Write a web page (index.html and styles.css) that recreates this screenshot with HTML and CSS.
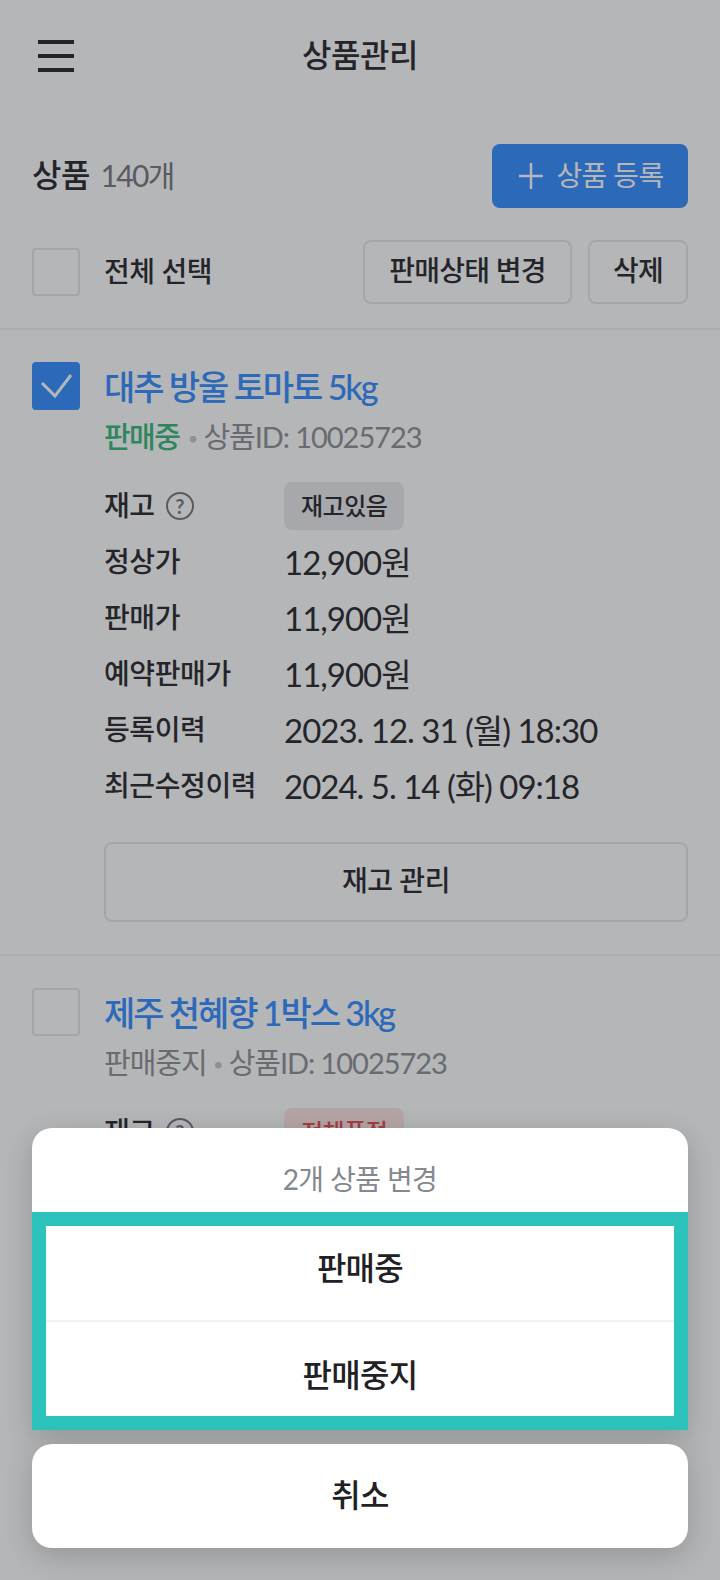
FILE: index.html
```html
<!DOCTYPE html>
<html lang="ko">

<head>
    <meta charset="UTF-8" />
    <meta name="viewport" content="width=device-width, initial-scale=1.0" />
    <title>상품관리</title>
    <link rel="stylesheet" href="styles.css">
</head>

<body>
    <header class="topbar">
        <div class="menu-icon">
            <div class="bar"></div>
            <div class="bar"></div>
            <div class="bar"></div>
        </div>
        <h1>상품관리</h1>
    </header>

    <main>
        <section class="summary">
            <h2>상품 <span class="count">140개</span></h2>
            <button class="btn-primary">
                <svg width="24" height="26" viewBox="0 0 24 26">
                    <path d="M12 0v26M0 13h24" fill="none" stroke="currentColor" stroke-width="2.5" />
                </svg>
                <span class="btn-text">상품 등록</span>
            </button>
        </section>

        <section class="toolbar">
            <label class="select-all">
                <span class="check"></span>
                <span class="btn-text">전체 선택</span>
            </label>
            <div class="actions">
                <button class="btn-line">판매상태 변경</button>
                <button class="btn-line btn-small">삭제</button>
            </div>
        </section>

        <article class="product">
            <span class="check checked">
                <svg width="48" height="48" viewBox="0 0 48 48">
                    <path d="M10 21l13 13L39 13" fill="none" stroke="#fff" stroke-width="3" />
                </svg>
            </span>
            <div class="product-body">
                <h3>대추 방울 토마토 5kg</h3>
                <p class="meta"><span class="on-sale">판매중</span> <span class="dot">•</span> 상품ID: 10025723</p>
                <dl class="specs">
                    <dt>재고 <span class="help">?</span></dt>
                    <dd><span class="badge">재고있음</span></dd>
                    <dt>정상가</dt>
                    <dd>12,900원</dd>
                    <dt>판매가</dt>
                    <dd>11,900원</dd>
                    <dt>예약판매가</dt>
                    <dd>11,900원</dd>
                    <dt>등록이력</dt>
                    <dd>2023. 12. 31 (월) 18:30</dd>
                    <dt>최근수정이력</dt>
                    <dd>2024. 5. 14 (화) 09:18</dd>
                </dl>
                <button class="btn-line btn-wide">재고 관리</button>
            </div>
        </article>

        <article class="product product-last">
            <span class="check"></span>
            <div class="product-body">
                <h3>제주 천혜향 1박스 3kg</h3>
                <p class="meta">판매중지 <span class="dot">•</span> 상품ID: 10025723</p>
                <dl class="specs">
                    <dt>재고 <span class="help">?</span></dt>
                    <dd><span class="badge badge-out">전체품절</span></dd>
                </dl>
            </div>
        </article>
    </main>

    <div class="dim"></div>

    <div class="sheet">
        <div class="sheet-group">
            <p class="sheet-title">2개 상품 변경</p>
            <div class="sheet-options">
                <button class="sheet-btn">판매중</button>
                <button class="sheet-btn">판매중지</button>
            </div>
        </div>
        <button class="sheet-btn sheet-cancel">취소</button>
    </div>
</body>

</html>
```

FILE: styles.css
```css
* {
    margin: 0;
    padding: 0;
    box-sizing: border-box;
}

body {
    font-family: Lato, 'Noto Sans CJK KR', sans-serif;
    color: #1f2125;
    background-color: #fff;
    width: 720px;
    height: 1580px;
    overflow: hidden;
    position: relative;
}

button {
    font-family: inherit;
    cursor: pointer;
    background: none;
    border: none;
}

.topbar {
    height: 112px;
    padding-bottom: 6px;
    position: relative;
    display: flex;
    align-items: center;
    justify-content: center;
}

.topbar h1 {
    font-size: 32px;
    font-weight: 500;
    letter-spacing: -0.5px;
}

.menu-icon {
    position: absolute;
    left: 38px;
    top: 40px;
    width: 36px;
    height: 32px;
    display: flex;
    flex-direction: column;
    justify-content: space-between;
}

.bar {
    height: 4px;
    background-color: #1f2125;
}

.summary {
    display: flex;
    justify-content: space-between;
    align-items: center;
    padding: 32px 32px 0;
}

.summary h2 {
    font-size: 32px;
    font-weight: 500;
    letter-spacing: -0.5px;
    padding-bottom: 6px;
}

.count {
    font-weight: 400;
    font-size: 30px;
    letter-spacing: -1.6px;
    color: #70737a;
    margin-left: 3px;
}

.btn-primary {
    width: 196px;
    height: 64px;
    padding-left: 3px;
    border-radius: 8px;
    background: #2d89ff;
    color: #fff;
    font-size: 28px;
    letter-spacing: -0.6px;
    display: flex;
    align-items: center;
    justify-content: center;
    gap: 13px;
}

.btn-text {
    padding-bottom: 4px;
}

.toolbar {
    display: flex;
    justify-content: space-between;
    align-items: center;
    padding: 32px 32px 24px;
    border-bottom: 2px solid #f0f1f2;
}

.select-all {
    display: flex;
    align-items: center;
    gap: 24px;
    font-size: 28px;
    font-weight: 500;
    letter-spacing: -0.4px;
}

.actions {
    display: flex;
    gap: 16px;
}

.check {
    width: 48px;
    height: 48px;
    flex-shrink: 0;
    border: 2px solid #e6e7e8;
    border-radius: 4px;
    display: flex;
    align-items: center;
    justify-content: center;
}

.check.checked {
    border: none;
    background: #2d89ff;
}

.btn-line {
    height: 64px;
    padding: 0 24px 6px;
    border: 2px solid #e6e7e8;
    border-radius: 8px;
    color: #1f2125;
    font-size: 28px;
    font-weight: 500;
    letter-spacing: -0.7px;
}

.btn-small {
    padding: 0 23px 6px;
}

.btn-wide {
    display: block;
    width: 100%;
    height: 80px;
    margin-top: 28px;
    letter-spacing: -0.4px;
}

.product {
    display: flex;
    gap: 24px;
    padding: 32px;
    border-bottom: 2px solid #f0f1f2;
}

.product-last {
    border-bottom: none;
}

.product-body {
    flex: 1;
}

.product h3 {
    font-size: 34px;
    font-weight: 500;
    line-height: 48px;
    margin-top: 1px;
    color: #2d89ff;
    letter-spacing: -2.1px;
}

.meta {
    font-size: 29px;
    line-height: 44px;
    margin-top: 4px;
    color: #8a8d93;
    letter-spacing: -1.05px;
}

.on-sale {
    color: #2fb574;
    font-weight: 500;
    letter-spacing: -1.6px;
    margin-right: 2px;
}

.dot {
    color: #c3c5c9;
    font-size: 18px;
    vertical-align: 3px;
}

.specs {
    display: grid;
    grid-template-columns: 180px 1fr;
    grid-auto-rows: 56px;
    align-items: center;
    margin-top: 18px;
}

.specs dt {
    font-size: 28px;
    font-weight: 500;
    letter-spacing: -0.4px;
    padding-bottom: 4px;
    display: flex;
    align-items: center;
    gap: 11px;
}

.specs dd {
    font-size: 33px;
    letter-spacing: -1px;
    padding-bottom: 3px;
}

.specs dd:has(.badge) {
    padding-bottom: 0;
}

.help {
    width: 28px;
    height: 28px;
    border: 2.5px solid #70737a;
    border-radius: 50%;
    color: #70737a;
    font-size: 20px;
    font-weight: 700;
    letter-spacing: 0;
    margin-top: 4px;
    display: flex;
    align-items: center;
    justify-content: center;
}

.badge {
    display: inline-flex;
    align-items: center;
    height: 48px;
    padding: 0 17px 4px;
    border-radius: 8px;
    background: #e9eaeb;
    font-size: 24px;
    font-weight: 500;
    letter-spacing: -0.5px;
}

.badge-out {
    background: #fde4e4;
    color: #e5484d;
}

.dim {
    position: absolute;
    inset: 0;
    background: rgba(44, 46, 52, 0.35);
}

.sheet {
    position: absolute;
    left: 32px;
    right: 32px;
    top: 1128px;
}

.sheet-group {
    background: #fff;
    border-radius: 20px 20px 0 0;
    box-shadow: 0 8px 30px rgba(0, 0, 0, 0.18);
}

.sheet-title {
    height: 84px;
    display: flex;
    align-items: center;
    justify-content: center;
    padding-top: 16px;
    font-size: 28px;
    letter-spacing: -0.6px;
    color: #85888e;
}

.sheet-options {
    border: 14px solid #2cc3bc;
}

.sheet-btn {
    display: block;
    width: 100%;
    height: 94px;
    padding-bottom: 14px;
    font-size: 32px;
    font-weight: 500;
    letter-spacing: -0.7px;
    color: #1f2125;
    background: #fff;
}

.sheet-options .sheet-btn + .sheet-btn {
    height: 96px;
    padding: 8px 0 0;
    border-top: 2px solid #f0f1f2;
}

.sheet-cancel {
    height: 104px;
    padding-bottom: 6px;
    margin-top: 14px;
    border-radius: 20px;
    box-shadow: 0 8px 30px rgba(0, 0, 0, 0.18);
}
```
